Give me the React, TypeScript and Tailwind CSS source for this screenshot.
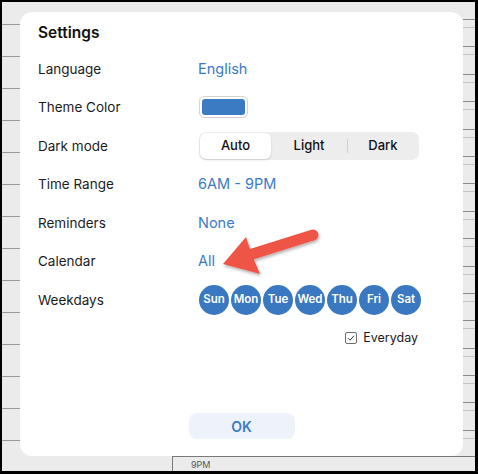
import React from "react";

const leftLines = Array.from({ length: 14 }, (_, i) => i);
const rightLines = Array.from({ length: 17 }, (_, i) => i);

function Row({ label, children }: { label: string; children: React.ReactNode }) {
  return (
    <div className="flex items-center h-[38.5px]">
      <div className="w-[160px] text-[13.5px] text-[#1c1c1e]">{label}</div>
      <div className="flex items-center">{children}</div>
    </div>
  );
}

export default function App() {
  const days = ["Sun", "Mon", "Tue", "Wed", "Thu", "Fri", "Sat"];
  return (
    <div
      className="relative w-[478px] h-[474px] bg-black pt-[2px] pl-[2px] pr-[3px] pb-[3px]"
      style={{ fontFamily: "Inter, 'Noto Sans', sans-serif" }}
    >
      <div className="relative w-full h-full bg-[#ebebeb] overflow-hidden flex flex-col">
        <div className="flex flex-1 min-h-0 overflow-hidden">
          {/* left strip */}
          <div className="w-[18px] flex flex-col pt-[22px]">
            {leftLines.map((i) => (
              <div key={i} className="h-[32px] border-t border-[#9a9a9a] shrink-0" />
            ))}
          </div>
          <div className="flex-1" />
          {/* right strip */}
          <div className="w-[12px] flex flex-col pt-[17px]">
            {rightLines.map((i) => (
              <div key={i} className="h-[27.4px] shrink-0 flex flex-col">
                <div className="h-[8px] border-t border-[#8a8a8a]" />
                <div className="border-t border-[#c4c4c4]" />
              </div>
            ))}
          </div>
        </div>
        {/* bottom strip */}
        <div className="flex h-[15px] shrink-0">
          <div className="w-[171px] border-r border-[#7a7a7a]" />
          <div className="flex-1 border-t border-[#7a7a7a] pl-[18px] pt-[3px] text-[9px] leading-[10px] text-[#555]">
            9PM
          </div>
        </div>

        {/* dialog */}
        <div className="absolute left-[18px] top-[10px] w-[443px] h-[444px] bg-white rounded-[12px] flex flex-col px-[18px] pt-[9px] pb-[17px]">
          <div className="h-[24px] flex items-center text-[15.5px] font-semibold text-[#111]">Settings</div>
          <div className="h-[4.5px]" />
          <Row label="Language">
            <span className="text-[14.5px] text-[#3b7bc6]">English</span>
          </Row>
          <Row label="Theme Color">
            <div className="w-[49px] h-[22px] rounded-[5px] border border-[#d4d4d8] p-[2px] ml-[1px]">
              <div className="w-full h-full rounded-[3px] bg-[#3b7bc4]" />
            </div>
          </Row>
          <Row label="Dark mode">
            <div className="ml-[1px] w-[220px] h-[28px] rounded-[7px] bg-[#ededee] p-[1px] flex items-center text-[13px] font-medium text-[#111]">
              <div className="w-[71px] h-[26px] rounded-[6px] bg-white shadow-[0_1px_2px_rgba(0,0,0,0.15)] flex items-center justify-center">
                Auto
              </div>
              <div className="w-[76px] flex items-center justify-center">Light</div>
              <div className="w-px h-[14px] bg-[#d0d0d2]" />
              <div className="flex-1 flex items-center justify-center">Dark</div>
            </div>
          </Row>
          <Row label="Time Range">
            <span className="text-[14.5px] text-[#3b7bc6]">6AM - 9PM</span>
          </Row>
          <Row label="Reminders">
            <span className="text-[14.5px] text-[#3b7bc6]">None</span>
          </Row>
          <Row label="Calendar">
            <span className="text-[14.5px] text-[#3b7bc6]">All</span>
          </Row>
          <Row label="Weekdays">
            <div className="flex gap-[2px] ml-[1px]">
              {days.map((d) => (
                <div
                  key={d}
                  className="w-[30px] h-[30px] rounded-full bg-[#3a78c1] text-white text-[11.5px] font-semibold flex items-center justify-center"
                >
                  {d}
                </div>
              ))}
            </div>
          </Row>
          <div className="flex justify-end items-center gap-[6px] pr-[27px] mt-[10px]">
            <div className="w-[12px] h-[12px] border border-[#6e6e6e] rounded-[2px] flex items-center justify-center">
              <svg width="8" height="8" viewBox="0 0 8 8">
                <path d="M1 4.2 L3 6.2 L7 1.8" fill="none" stroke="#333" strokeWidth="1" />
              </svg>
            </div>
            <span className="text-[12.5px] text-[#1c1c1e]">Everyday</span>
          </div>
          <div className="flex-1" />
          <div className="flex justify-center">
            <button className="w-[106px] h-[26px] rounded-[8px] bg-[#eef2fa] text-[#3b7bc6] text-[14px] font-semibold">
              OK
            </button>
          </div>
        </div>
      </div>

      {/* red arrow overlay */}
      <svg className="absolute inset-0 pointer-events-none" width="478" height="474" viewBox="0 0 478 474">
        <defs>
          <filter id="sh" x="-20%" y="-20%" width="140%" height="140%">
            <feDropShadow dx="1" dy="2" stdDeviation="1.5" floodColor="#000" floodOpacity="0.3" />
          </filter>
        </defs>
        <g filter="url(#sh)">
          <line x1="313" y1="235" x2="246" y2="256" stroke="#ef5446" strokeWidth="11" strokeLinecap="round" />
          <polygon points="223,264 246,237 252,255 260,274" fill="#ef5446" />
        </g>
      </svg>
    </div>
  );
}
